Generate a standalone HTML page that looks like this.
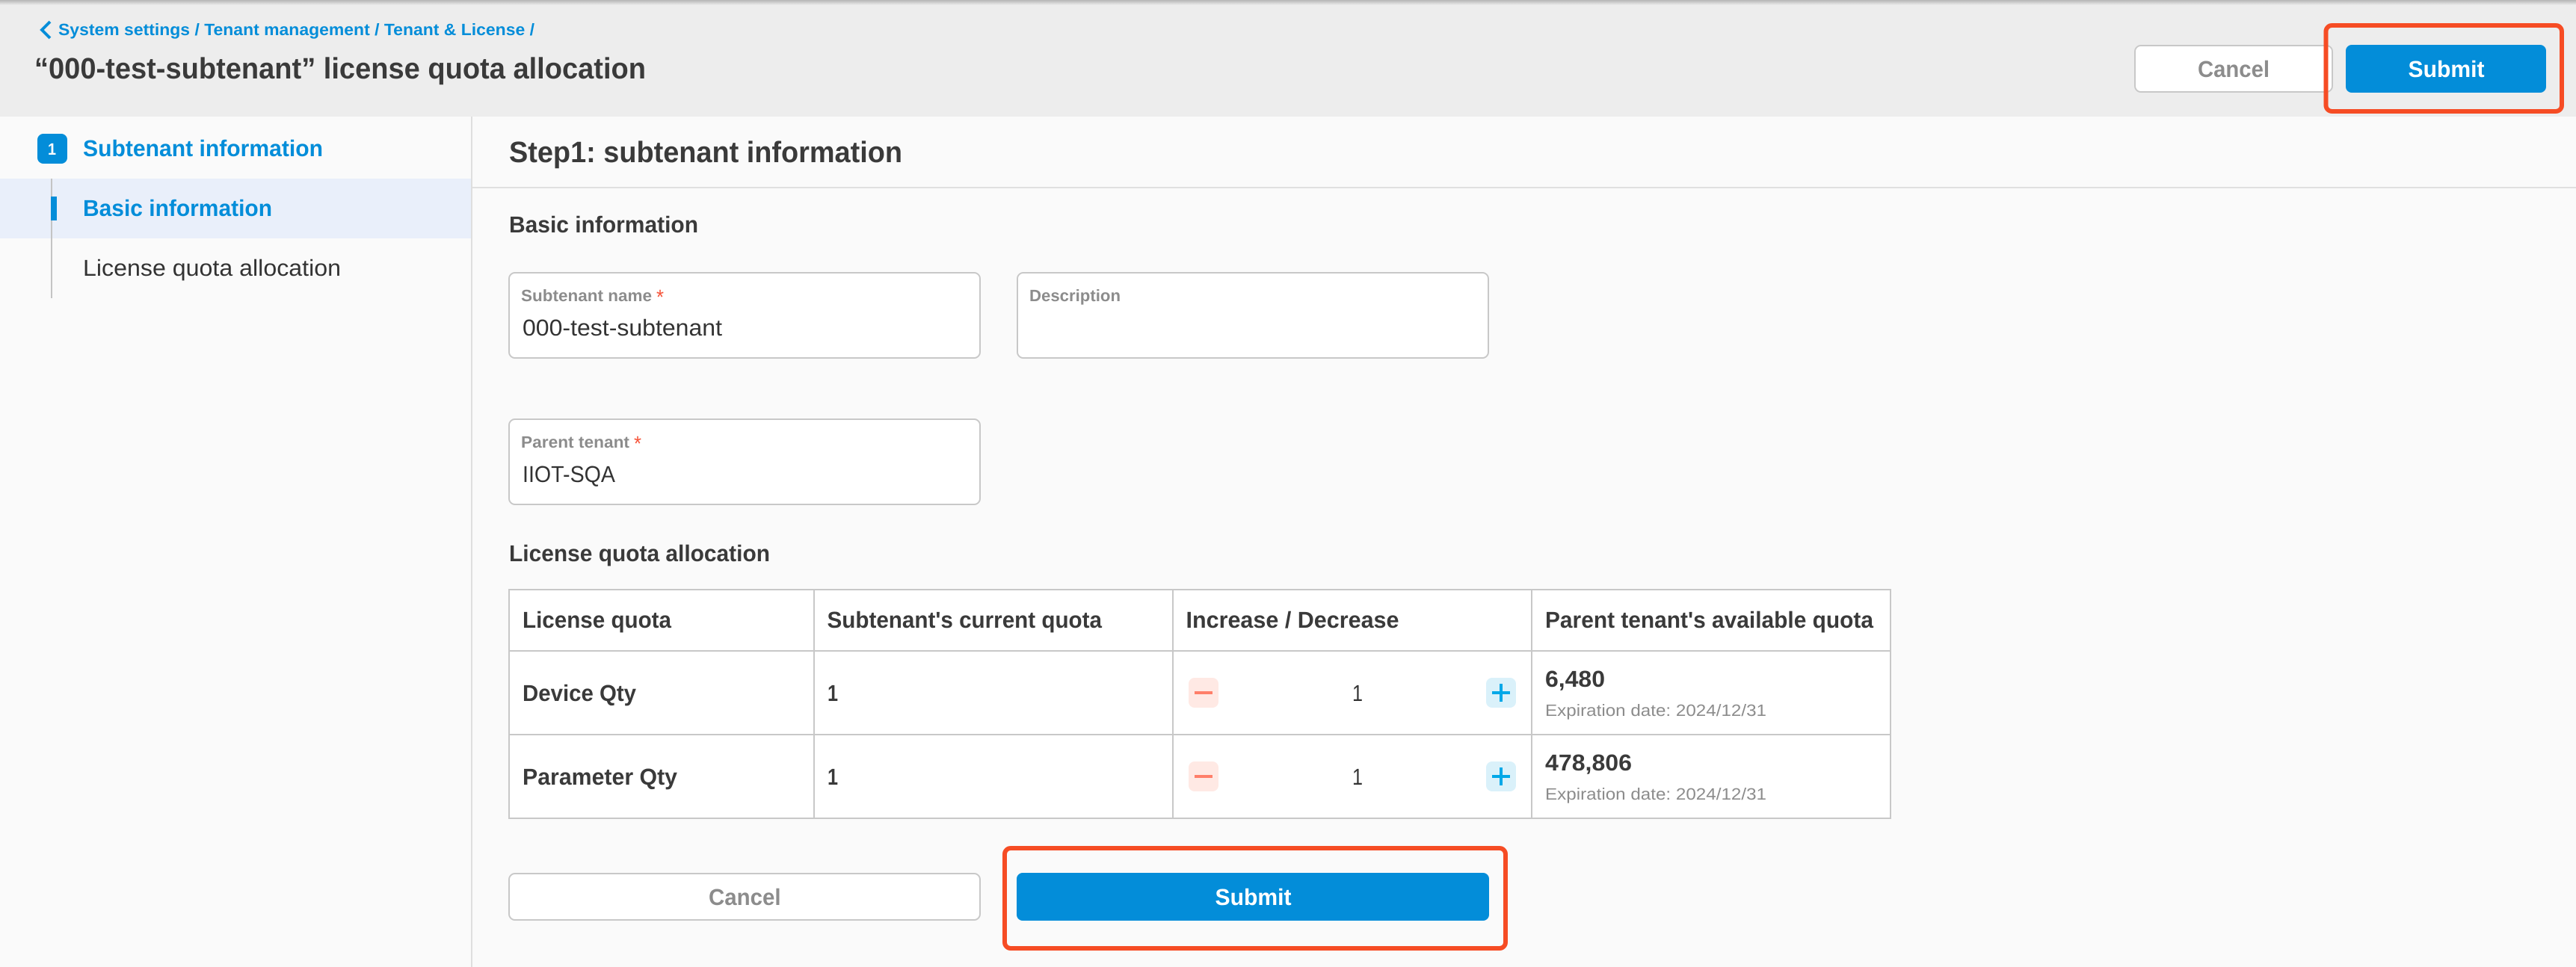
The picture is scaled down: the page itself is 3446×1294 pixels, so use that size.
<!DOCTYPE html>
<html lang="en"><head><meta charset="utf-8"><title>License quota allocation</title>
<style>
html,body{margin:0;padding:0;background:#fafafa;width:3446px;height:1294px;overflow:hidden}
svg{display:block}
text{font-family:"Liberation Sans",sans-serif;text-rendering:geometricPrecision;white-space:pre}
.b{font-weight:700}
.dk{fill:#333}
.b.dk{fill:#3a3a3a}
.gr{fill:#8c8c8c}
.bl{fill:#038dd9}
.f22{font-size:22px}
.f31{font-size:30.8px}
.f40{font-size:39.6px}
</style></head><body>
<svg xmlns="http://www.w3.org/2000/svg" width="3446" height="1294" viewBox="0 0 3446 1294">
<defs><linearGradient id="s" x1="0" y1="0" x2="0" y2="1"><stop offset="0" stop-color="#b4b4b4"/><stop offset="1" stop-color="#ededed"/></linearGradient></defs>
<rect width="3446" height="1294" fill="#fafafa"/>
<!-- header -->
<rect width="3446" height="156" fill="#ededed"/>
<rect width="3446" height="7" fill="url(#s)"/>
<path d="M67 29 L56 40 L67 51" fill="none" stroke="#038dd9" stroke-width="4"/>
<text x="78" y="47" class="b bl f22" textLength="637" lengthAdjust="spacingAndGlyphs">System settings / Tenant management / Tenant &amp; License /</text>
<text x="46" y="105" class="b dk f40" textLength="818" lengthAdjust="spacingAndGlyphs">“000-test-subtenant” license quota allocation</text>
<rect x="2856" y="61" width="264" height="62" rx="8" fill="#fff" stroke="#c8c8c8" stroke-width="2"/>
<text x="2940" y="103" class="b gr f31" textLength="96" lengthAdjust="spacingAndGlyphs">Cancel</text>
<rect x="3138" y="60" width="268" height="64" rx="8" fill="#038dd9"/>
<text x="3221.5" y="103" class="b f31" fill="#fff" textLength="102" lengthAdjust="spacingAndGlyphs">Submit</text>
<rect x="3111.5" y="34" width="315.5" height="115" rx="8" fill="none" stroke="#f64c24" stroke-width="6"/>
<!-- sidebar -->
<rect x="0" y="239" width="631" height="80" fill="#e9effa"/>
<rect x="630" y="156" width="2" height="1138" fill="#dedede"/>
<rect x="68" y="239" width="2" height="160" fill="#c4c4c4"/>
<rect x="68" y="263" width="8" height="32" fill="#038dd9"/>
<rect x="50" y="179" width="40" height="40" rx="8" fill="#038dd9"/>
<text x="64" y="207" class="b f22" fill="#fff" textLength="11" lengthAdjust="spacingAndGlyphs">1</text>
<text x="111" y="209" class="b bl f31" textLength="321" lengthAdjust="spacingAndGlyphs">Subtenant information</text>
<text x="111" y="289" class="b bl f31" textLength="253" lengthAdjust="spacingAndGlyphs">Basic information</text>
<text x="111" y="369" class="dk f31" textLength="345" lengthAdjust="spacingAndGlyphs">License quota allocation</text>
<!-- main -->
<text x="681" y="217" class="b dk f40" textLength="526" lengthAdjust="spacingAndGlyphs">Step1: subtenant information</text>
<rect x="632" y="250" width="2814" height="2" fill="#e0e0e0"/>
<text x="681" y="311" class="b dk f31" textLength="253" lengthAdjust="spacingAndGlyphs">Basic information</text>
<rect x="681" y="365" width="630" height="114" rx="8" fill="#fff" stroke="#c8c8c8" stroke-width="2"/>
<text x="697" y="403" class="b gr f22" textLength="175" lengthAdjust="spacingAndGlyphs">Subtenant name</text>
<text x="878" y="407" style="font-size:28px" fill="#f6543a" textLength="10" lengthAdjust="spacingAndGlyphs">*</text>
<text x="699" y="449" class="dk f31" textLength="267" lengthAdjust="spacingAndGlyphs">000-test-subtenant</text>
<rect x="1361" y="365" width="630" height="114" rx="8" fill="#fff" stroke="#c8c8c8" stroke-width="2"/>
<text x="1377" y="403" class="b gr f22" textLength="122" lengthAdjust="spacingAndGlyphs">Description</text>
<rect x="681" y="561" width="630" height="114" rx="8" fill="#fff" stroke="#c8c8c8" stroke-width="2"/>
<text x="697" y="599" class="b gr f22" textLength="145" lengthAdjust="spacingAndGlyphs">Parent tenant</text>
<text x="848" y="603" style="font-size:28px" fill="#f6543a" textLength="10" lengthAdjust="spacingAndGlyphs">*</text>
<text x="699" y="645" class="dk f31" textLength="124" lengthAdjust="spacingAndGlyphs">IIOT-SQA</text>
<text x="681" y="751" class="b dk f31" textLength="349" lengthAdjust="spacingAndGlyphs">License quota allocation</text>
<!-- table -->
<rect x="681" y="789" width="1848" height="306" fill="#fff" stroke="#c8c8c8" stroke-width="2"/>
<rect x="681" y="870" width="1848" height="2" fill="#c8c8c8"/>
<rect x="681" y="982" width="1848" height="2" fill="#c8c8c8"/>
<rect x="1088" y="789" width="2" height="306" fill="#c8c8c8"/>
<rect x="1568" y="789" width="2" height="306" fill="#c8c8c8"/>
<rect x="2048" y="789" width="2" height="306" fill="#c8c8c8"/>
<text x="699" y="840" class="b dk f31" textLength="199" lengthAdjust="spacingAndGlyphs">License quota</text>
<text x="1106.5" y="840" class="b dk f31" textLength="367.5" lengthAdjust="spacingAndGlyphs">Subtenant's current quota</text>
<text x="1586.5" y="840" class="b dk f31" textLength="285" lengthAdjust="spacingAndGlyphs">Increase / Decrease</text>
<text x="2067" y="840" class="b dk f31" textLength="439" lengthAdjust="spacingAndGlyphs">Parent tenant's available quota</text>
<text x="699" y="938" class="b dk f31" textLength="152" lengthAdjust="spacingAndGlyphs">Device Qty</text>
<text x="699" y="1050" class="b dk f31" textLength="207" lengthAdjust="spacingAndGlyphs">Parameter Qty</text>
<text x="1107" y="938" class="b dk f31" textLength="14" lengthAdjust="spacingAndGlyphs">1</text>
<text x="1107" y="1050" class="b dk f31" textLength="14" lengthAdjust="spacingAndGlyphs">1</text>
<rect x="1590" y="907" width="40" height="40" rx="8" fill="#ffe9e4"/>
<rect x="1598" y="925" width="24" height="4" fill="#ff7f6a"/>
<rect x="1988" y="907" width="40" height="40" rx="8" fill="#daf1fa"/>
<rect x="1996" y="925" width="24" height="4" fill="#00a8e8"/>
<rect x="2006" y="915" width="4" height="24" fill="#00a8e8"/>
<text x="1809" y="938" class="dk f31" textLength="14" lengthAdjust="spacingAndGlyphs">1</text>
<rect x="1590" y="1019" width="40" height="40" rx="8" fill="#ffe9e4"/>
<rect x="1598" y="1037" width="24" height="4" fill="#ff7f6a"/>
<rect x="1988" y="1019" width="40" height="40" rx="8" fill="#daf1fa"/>
<rect x="1996" y="1037" width="24" height="4" fill="#00a8e8"/>
<rect x="2006" y="1027" width="4" height="24" fill="#00a8e8"/>
<text x="1809" y="1050" class="dk f31" textLength="14" lengthAdjust="spacingAndGlyphs">1</text>
<text x="2067" y="919" class="b dk f31" textLength="80" lengthAdjust="spacingAndGlyphs">6,480</text>
<text x="2067" y="958" class="gr f22" textLength="296" lengthAdjust="spacingAndGlyphs">Expiration date: 2024/12/31</text>
<text x="2067" y="1031" class="b dk f31" textLength="116" lengthAdjust="spacingAndGlyphs">478,806</text>
<text x="2067" y="1070" class="gr f22" textLength="296" lengthAdjust="spacingAndGlyphs">Expiration date: 2024/12/31</text>
<!-- bottom buttons -->
<rect x="681" y="1169" width="630" height="62" rx="8" fill="#fff" stroke="#c8c8c8" stroke-width="2"/>
<text x="948" y="1211" class="b gr f31" textLength="96.5" lengthAdjust="spacingAndGlyphs">Cancel</text>
<rect x="1360" y="1168" width="632" height="64" rx="8" fill="#038dd9"/>
<text x="1625.5" y="1211" class="b f31" fill="#fff" textLength="102" lengthAdjust="spacingAndGlyphs">Submit</text>
<rect x="1344" y="1135" width="670" height="134" rx="8" fill="none" stroke="#f64c24" stroke-width="6"/>
</svg>
</body></html>
